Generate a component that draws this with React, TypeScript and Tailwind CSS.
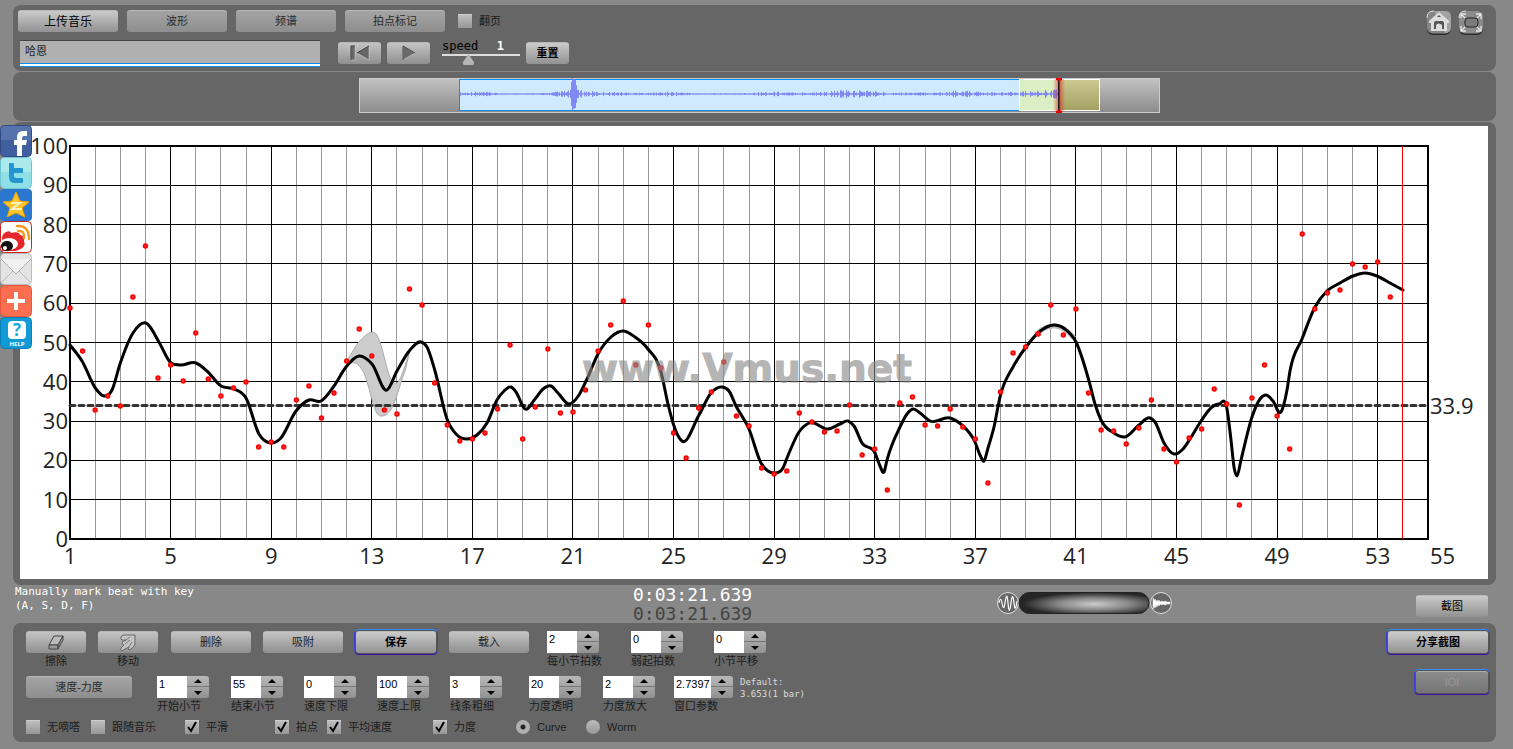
import type { ReactNode } from "react";
import { useId } from "react";

type Point = [number, number];

// Chart geometry, in the units of the chart's viewBox
const LEFT = 50;
const RIGHT = 1408;
const TOP = 20;
const BOTTOM = 413;
const BAR = (RIGHT - LEFT) / 54;

const bars = Array.from({ length: 55 }, (_, i) => i + 1);
const levels = [0, 10, 20, 30, 40, 50, 60, 70, 80, 90, 100];

// One tempo dot for every half bar
const beats = [
  182, 225, 284, 270, 280, 171, 120, 252, 239, 255, 207, 253, 270, 262, 256, 321, 316, 321, 274, 260,
  292, 267, 235, 203, 230, 284, 288, 163, 179, 257, 299, 315, 313, 307, 283, 219, 313, 281, 223, 287,
  286, 264, 225, 199, 175, 239, 199, 242, 307, 332, 282, 266, 236, 290, 300, 342, 348, 345, 287, 296,
  306, 305, 279, 329, 323, 364, 277, 271, 299, 300, 283, 301, 313, 357, 266, 227, 221, 208, 179, 209,
  183, 267, 304, 305, 318, 302, 274, 323, 336, 312, 303, 263, 278, 379, 272, 239, 290, 323, 108, 183,
  167, 164, 138, 141, 136, 171,
];

const tempo: Point[] = [
  [50, 219], [62, 235], [76, 263], [84, 270], [92, 264], [100, 238], [113, 207], [126, 197],
  [140, 218], [150, 236], [160, 239], [176, 237], [187, 245], [201, 260], [214, 263], [226, 272],
  [239, 308], [251, 317], [260, 313], [276, 285], [289, 274], [301, 275], [314, 260], [326, 241],
  [339, 230], [352, 238], [367, 264], [377, 245], [390, 224], [401, 216], [407, 221],
  [415, 245], [427, 293], [437, 309], [447, 313], [457, 309], [467, 297], [477, 274], [484, 265],
  [491, 261], [496, 266], [505, 283], [515, 273], [523, 263], [531, 260], [538, 267],
  [549, 278], [559, 269], [567, 253], [578, 228], [591, 211], [603, 205], [615, 211],
  [628, 223], [641, 246], [648, 278], [653, 297], [662, 315], [679, 289], [691, 267],
  [702, 261], [709, 265], [716, 280], [729, 303], [741, 337], [748, 345], [755, 347], [763, 342],
  [767, 332], [779, 306], [789, 297], [808, 303], [820, 298], [828, 295],
  [834, 300], [842, 317], [855, 327], [860, 340], [864, 346], [867, 334], [880, 301], [887, 288],
  [893, 283], [900, 287], [910, 295], [930, 292], [942, 299], [955, 316], [960, 329],
  [964, 335], [968, 322], [974, 301], [980, 271], [993, 241], [1006, 221], [1018, 207],
  [1035, 199], [1045, 203], [1056, 216], [1069, 255], [1075, 278], [1081, 294], [1094, 307],
  [1105, 311], [1119, 299], [1130, 292], [1135, 296], [1144, 317], [1154, 328],
  [1163, 323], [1170, 313], [1181, 295], [1192, 281], [1199, 278], [1207, 283], [1211, 314],
  [1214, 341], [1217, 350], [1221, 334], [1232, 291], [1240, 273], [1246, 269], [1253, 275],
  [1261, 286], [1267, 264], [1270, 245], [1282, 213], [1295, 181], [1307, 165],
  [1320, 157], [1333, 150], [1345, 147], [1357, 150], [1370, 157], [1383, 164],
];

// Half height of the waveform, one sample per unit
const wave = Array.from({ length: 600 }, (_, i) => {
  const noise = Math.abs(Math.sin(i * 12.9898) * 43758.5453) % 1;
  const swell = Math.max(0, Math.sin(i * 0.065 + 0.5)) + Math.max(0, Math.sin(i * 0.027 + 4.2));
  const peak = 13 * Math.exp(-Math.pow((i - 114.5) / 3, 4));
  const base = i > 370 ? 1.2 : 0.2;
  return 0.6 + noise * noise * (base + swell * 1.8) + peak;
});

const wavePath = wave
  .map((h, i) => `M${100.5 + i} ${(16 - h).toFixed(1)}V${(16 + h).toFixed(1)}`)
  .join("");

// Cubic through all points; tangents are weighted by the spacing of the neighbours
function smooth(pts: Point[]) {
  const slope = (i: number) => (pts[i + 1][1] - pts[i][1]) / (pts[i + 1][0] - pts[i][0]);
  const last = pts.length - 1;
  const tangents = pts.map((p, i) => {
    if (i === 0) return slope(0);
    if (i === last) return slope(last - 1);
    const before = p[0] - pts[i - 1][0];
    const after = pts[i + 1][0] - p[0];
    return (slope(i - 1) * after + slope(i) * before) / (before + after);
  });
  let d = `M${pts[0][0]} ${pts[0][1]}`;
  for (let i = 0; i < last; i++) {
    const [x0, y0] = pts[i];
    const [x1, y1] = pts[i + 1];
    const third = (x1 - x0) / 3;
    d += `C${x0 + third} ${y0 + tangents[i] * third} ${x1 - third} ${y1 - tangents[i + 1] * third} ${x1} ${y1}`;
  }
  return d;
}

const tones = {
  bright: "bg-linear-to-b from-[#cbcbcb] to-[#929292] text-black",
  normal: "bg-linear-to-b from-[#c4c4c4] to-[#8f8f8f] text-[#222]",
  dim: "bg-linear-to-b from-[#a4a4a4] to-[#8e8e8e] text-[#2b2b2b]",
  ringed:
    "bg-linear-to-b from-[#cbcbcb] to-[#929292] font-bold text-black shadow-[0_0_0_1px_#555,0_-1px_0_1px_#2f8cf0,0_1px_0_1px_#3a10b0,0_0_0_2px_#3d3fd8]",
  off: "bg-linear-to-b from-[#8c8c8c] to-[#757575] text-[#999] shadow-[0_0_0_1px_#555,0_-1px_0_1px_#2f8cf0,0_1px_0_1px_#3a10b0,0_0_0_2px_#3d3fd8]",
};

function Button({
  tone = "normal",
  size,
  label,
  disabled,
  children,
}: {
  tone?: keyof typeof tones;
  size: string;
  label?: string;
  disabled?: boolean;
  children: ReactNode;
}) {
  return (
    <button
      type="button"
      aria-label={label}
      disabled={disabled}
      className={`flex h-[22px] shrink-0 items-center justify-center rounded-[3px] border-t border-[#d0d0d0]/60 whitespace-nowrap ${tones[tone]} ${size}`}
    >
      {children}
    </button>
  );
}

function Check({ label, checked }: { label: string; checked?: boolean }) {
  return (
    <label className="relative flex items-center gap-[7px] whitespace-nowrap">
      <input
        type="checkbox"
        defaultChecked={checked}
        className="peer size-[14px] appearance-none border-t border-[#ccc] bg-linear-to-b from-[#bdbdbd] to-[#979797]"
      />
      <svg viewBox="0 0 14 14" className="absolute left-0 hidden size-[14px] peer-checked:block">
        <path d="M3 7 L6 11 L11 2" fill="none" stroke="#000" strokeWidth="2" />
      </svg>
      {label}
    </label>
  );
}

function Radio({ label, checked }: { label: string; checked?: boolean }) {
  return (
    <label className="flex items-center gap-[7px]">
      <input
        type="radio"
        name="view"
        defaultChecked={checked}
        className="size-[14px] appearance-none rounded-full bg-linear-to-b from-[#bdbdbd] to-[#979797] checked:bg-[radial-gradient(circle,#222_2px,#b0b0b0_3px)]"
      />
      {label}
    </label>
  );
}

function Stepper({ label, value, wide }: { label: string; value: string; wide?: boolean }) {
  const id = useId();
  return (
    <div className="whitespace-nowrap">
      <div className="flex h-[22px]">
        <input
          id={id}
          type="text"
          defaultValue={value}
          className={`h-[22px] bg-white pb-[6px] pl-[2px] text-[11px] text-black outline-none ${
            wide ? "w-[37px]" : "w-[30px]"
          }`}
        />
        <div className="flex w-[22px] flex-col overflow-hidden rounded-r-[3px] bg-linear-to-b from-[#b8b8b8] to-[#929292]">
          <button type="button" aria-label={`${label} +`} className="flex h-[11px] items-center justify-center border-b border-[#777]">
            <svg viewBox="0 0 8 4" className="h-1 w-2">
              <path d="M0 4 L4 0 L8 4Z" />
            </svg>
          </button>
          <button type="button" aria-label={`${label} -`} className="flex flex-1 items-center justify-center">
            <svg viewBox="0 0 8 4" className="h-1 w-2">
              <path d="M0 0 L4 4 L8 0Z" />
            </svg>
          </button>
        </div>
      </div>
      <label htmlFor={id} className="block leading-4">
        {label}
      </label>
    </div>
  );
}

function TopBar() {
  return (
    <header className="flex h-[66px] justify-between rounded-lg bg-[#666] pt-[5px] pr-3 pl-[5px]">
      <div>
        <div className="flex items-center gap-[9px]">
          <Button tone="bright" size="w-[100px] text-[12px]">上传音乐</Button>
          <Button tone="dim" size="w-[100px]">波形</Button>
          <Button tone="dim" size="w-[100px]">频谱</Button>
          <Button tone="dim" size="w-[100px]">拍点标记</Button>
          <div className="pl-1">
            <Check label="翻页" />
          </div>
        </div>
        <div className="flex pt-[6px] pl-[2px]">
          <input
            type="text"
            aria-label="曲名"
            defaultValue="哈恩"
            className="mt-[2px] h-[27px] w-[300px] border-t border-[#444] bg-[#b0b0b0] bg-[linear-gradient(#0a8cf0_1px,#fff_1px,#fff_3px,#0a8cf0_3px)] bg-[length:100%_4px] bg-bottom bg-no-repeat px-[5px] pb-2 text-[11px] text-[#222] outline-none"
          />
          <div className="flex items-center gap-[6px] pl-[18px]">
            <Button size="w-[43px]" label="回到开头">
              <svg viewBox="0 0 24 18" className="h-[18px] w-6">
                <path d="M3 2h4v14H3zM21 2v14L9 9z" fill="#666" stroke="#ddd" strokeWidth="0.5" />
                <path d="M3 16V2h4M9 9 21 2" fill="none" stroke="#333" />
              </svg>
            </Button>
            <Button size="w-[43px]" label="播放">
              <svg viewBox="0 0 24 18" className="h-[18px] w-6">
                <path d="M6 2v14l12-7z" fill="#6a6a6a" stroke="#ddd" strokeWidth="0.5" />
                <path d="M6 16V2l12 7" fill="none" stroke="#444" />
              </svg>
            </Button>
            <div className="h-[28px] w-[84px] pl-[6px]">
              <div className="flex h-[14px] items-center justify-between pr-4 font-['DejaVu_Sans_Mono',monospace] text-[12px] text-black">
                <label htmlFor="speed">speed</label>
                <span className="font-bold text-white">1</span>
              </div>
              <input
                id="speed"
                type="range"
                min="0.1"
                max="3"
                step="0.1"
                defaultValue="1"
                className="block h-[14px] w-full appearance-none bg-[linear-gradient(#ddd,#ddd)] bg-[length:100%_2px] bg-[position:0_1px] bg-no-repeat [&::-webkit-slider-thumb]:h-[11px] [&::-webkit-slider-thumb]:w-[12px] [&::-webkit-slider-thumb]:appearance-none [&::-webkit-slider-thumb]:bg-[#b5b5b5] [&::-webkit-slider-thumb]:[clip-path:polygon(50%_0,100%_80%,90%_100%,10%_100%,0_80%)]"
              />
            </div>
            <Button tone="bright" size="w-[43px] font-bold">重置</Button>
          </div>
        </div>
      </div>
      <div className="flex items-start gap-[6px]">
        <a href="#home" aria-label="Home">
          <svg viewBox="0 0 26 25" className="h-[25px] w-[26px]">
            <rect x="1" y="3" width="24" height="22" rx="6" fill="#2b2b2b" />
            <rect x="1" y="1" width="24" height="22.5" rx="6" fill="#858585" />
            <path d="M8 1h11q6 0 6 6v10q0 6-6 6" fill="#a2a2a2" />
            <path d="M1 8Q1 1 8 1" fill="none" stroke="#ddd" />
            <path d="M13 2 3 11v2h2v8h16v-8h2v-2z" fill="#ddd" />
            <path d="M8 13q0-2 2-2h6q2 0 2 2v6h-2v-4q-3-3-6 0v4H8zM11 7l2-2 2 2z" fill="#555" />
          </svg>
        </a>
        <button type="button" aria-label="Fullscreen">
          <svg viewBox="0 0 26 25" className="h-[25px] w-[26px]">
            <rect x="1" y="3" width="24" height="22" rx="6" fill="#2b2b2b" />
            <rect x="1" y="1" width="24" height="22.5" rx="6" fill="#8c8c8c" />
            <path d="M1 8Q1 1 8 1" fill="none" stroke="#ddd" />
            <rect x="7" y="8" width="13" height="9" rx="3" fill="#7c7c7c" stroke="#222" />
            <path d="M3 8V4h5M18 4h5v5M3 16v5h5M23 16v5h-5M3 4l4 4M23 4l-4 4M3 21l4-4M23 21l-4-4" fill="none" stroke="#e4e4e4" strokeWidth="1.3" />
          </svg>
        </button>
      </div>
    </header>
  );
}

function Overview() {
  return (
    <section className="mt-px flex h-[49px] justify-center rounded-lg bg-[#666] pt-[6px] pl-[9px]">
      <svg viewBox="0 0 801 35" className="h-[35px] w-[801px] shrink-0">
        <defs>
          <linearGradient id="idle" x2="0" y2="1">
            <stop offset="0" stopColor="#c2c2c2" />
            <stop offset="1" stopColor="#8c8c8c" />
          </linearGradient>
          <linearGradient id="ahead" x2="0" y2="1">
            <stop offset="0" stopColor="#cbca92" />
            <stop offset="1" stopColor="#a3a062" />
          </linearGradient>
          <linearGradient id="glow">
            <stop offset="0" stopColor="#f00" stopOpacity="0" />
            <stop offset="0.5" stopColor="#c22" stopOpacity="0.6" />
            <stop offset="1" stopColor="#f00" stopOpacity="0" />
          </linearGradient>
        </defs>
        <rect x="0.5" y="0.5" width="800" height="34" fill="url(#idle)" stroke="#ccc" />
        <rect x="100.5" y="1.5" width="600" height="31" fill="#cfeafe" stroke="#0a90f5" />
        <rect x="660.5" y="1.5" width="40" height="31" fill="#daf0c4" />
        <path d={wavePath} stroke="#8088f4" />
        <rect x="700" y="1.5" width="40" height="31" fill="url(#ahead)" />
        <rect x="660.5" y="1.5" width="80" height="31" fill="none" stroke="#fff" />
        <rect x="694" y="1" width="12" height="33" fill="url(#glow)" />
        <path d="M699.5 1v33" stroke="#222" />
        <path d="M700.5 1v33" stroke="#d00" />
        <path d="M697 0h6v2l-3 1-3-1zM697 35h6v-2l-3-1-3 1z" fill="#e00" />
      </svg>
    </section>
  );
}

function TempoChart() {
  return (
    <section className="mt-px rounded-lg bg-[#666] pt-1 pr-2 pb-[6px] pl-[7px]">
      <svg
        viewBox="0 0 1468 453"
        className="block h-auto w-full bg-white font-['Open_Sans',sans-serif] text-[22px]"
        role="img"
        aria-label="Tempo curve"
      >
        <g shapeRendering="crispEdges">
          {bars.map((n) => (
            <path
              key={n}
              d={`M${Math.floor(LEFT + (n - 1) * BAR) + 0.5} ${TOP}V${BOTTOM}`}
              stroke={n % 4 === 1 ? "#000" : "#999"}
            />
          ))}
          {levels.map((v) => (
            <path key={v} d={`M${LEFT} ${Math.floor(BOTTOM - v * 3.93) + 0.5}H${RIGHT}`} stroke="#000" />
          ))}
          <rect x={LEFT} y={TOP} width={RIGHT - LEFT} height={BOTTOM - TOP} fill="none" stroke="#000" strokeWidth="2" />
        </g>

        <g fill="#222">
          {levels.map((v) => (
            <text key={v} x="48" y={BOTTOM - v * 3.93 + 8} textAnchor="end">
              {v}
            </text>
          ))}
          {bars
            .filter((n) => n % 4 === 1)
            .map((n) => (
              <text key={n} x={LEFT + (n - 1) * BAR} y="438" textAnchor="middle">
                {n}
              </text>
            ))}
          <text x="1410" y="438">55</text>
          <text x="1410" y="288">33.9</text>
        </g>

        {/* dynamics band */}
        <path
          d="M327 234C332 228 336 218 340 215C347 207 353 203 357 209C365 225 366 250 374 257C379 261 383 246 390 224L385 245C378 262 374 290 362 290C354 292 352 268 344 247C338 236 333 234 327 240Z"
          fill="#ccc"
          stroke="#aaa"
        />
        <path d={`M${LEFT} 279.5H${RIGHT}`} stroke="#333" strokeWidth="3" strokeDasharray="5 4" strokeLinecap="round" />
        <path d="M1016 208Q1036 190 1054 212" fill="none" stroke="#bbb" strokeWidth="5" />
        <path d={smooth(tempo)} fill="none" stroke="#000" strokeWidth="3" strokeLinecap="round" />
        <path d={`M1382.5 ${TOP}V${BOTTOM}`} stroke="#f00" shapeRendering="crispEdges" />
        {beats.map((y, i) => (
          <circle key={i} cx={LEFT + (i * BAR) / 2} cy={y} r="1.8" fill="#f44" stroke="#f00" strokeWidth="1.8" />
        ))}
        <text
          x="562"
          y="256"
          fill="#888"
          stroke="#888"
          strokeWidth="1"
          opacity="0.62"
          className="font-['DejaVu_Sans',sans-serif] text-[39px] font-bold"
        >
          www.Vmus.net
        </text>
      </svg>
    </section>
  );
}

function StatusRow() {
  return (
    <section className="flex h-[38px] items-start pr-2 pl-[2px] font-['DejaVu_Sans_Mono',monospace]">
      <p className="w-[618px] text-[11px] leading-[14px] text-white">
        Manually mark beat with key
        <br />
        (A, S, D, F)
      </p>
      <div className="text-[18px] leading-[19px]">
        <div className="text-white">0:03:21.639</div>
        <div className="text-[#444]">0:03:21.639</div>
      </div>
      <svg viewBox="0 0 176 24" className="mt-[6px] ml-[245px] h-6 w-[176px]">
        <defs>
          <radialGradient id="zoom" cx="0.58" cy="0.55" r="0.55">
            <stop offset="0" stopColor="#ccc" />
            <stop offset="0.5" stopColor="#888" />
            <stop offset="1" stopColor="#262626" />
          </radialGradient>
        </defs>
        <circle cx="11" cy="12" r="10.5" fill="#666" stroke="#ddd" />
        <path d="M2 12C3 7 4 7 5 12S7 19 8 12 10 1 11 12 13 20 14 12 16 3 17 12 19 17 20 10" fill="none" stroke="#fff" strokeWidth="1.2" />
        <rect x="22" y="1.5" width="130" height="21" rx="10.5" fill="url(#zoom)" stroke="#222" />
        <circle cx="164" cy="12" r="10.5" fill="#666" stroke="#ddd" />
        <path d="M156 7l1 3 1-2 1 3 1-2 1 2 1-2 1 2 2-1 1 1 2-1 2 1h3v2h-3l-2 1-2-1-1 1-2-1-1 2-1-2-1 3-1-2-1 3-1-2-1 3z" fill="#fff" stroke="#fff" strokeWidth="0.5" />
      </svg>
      <div className="mt-[10px] ml-auto font-['Liberation_Sans','Noto_Sans_CJK_SC',sans-serif] text-[11px]">
        <Button tone="bright" size="w-[72px]">截图</Button>
      </div>
    </section>
  );
}

function Controls() {
  return (
    <section className="flex h-[119px] justify-between rounded-lg bg-[#666] pt-2 pr-2 pl-[13px]">
      <div>
        <div className="grid h-[45px] grid-cols-[72px_73px_92px_93px_93px_98px_84px_83px_auto] items-start">
          <div className="w-[60px] text-center leading-4">
            <Button size="w-[60px]" label="擦除">
              <svg viewBox="0 0 18 16" className="h-4 w-[18px]">
                <path d="M7 1h9l-5 9H2z" fill="#bbb" stroke="#444" strokeLinejoin="round" />
                <path d="M2 10v4h9v-4zM11 14l5-9V1l-5 9z" fill="#999" stroke="#444" strokeLinejoin="round" />
              </svg>
            </Button>
            擦除
          </div>
          <div className="w-[60px] text-center leading-4">
            <Button size="w-[60px]" label="移动">
              <svg viewBox="0 0 18 18" className="h-[18px] w-[18px]">
                <path
                  d="M5 1h11v9q-1 3-4 5l-2 1q-1-1 0-3l-4 2-3 2q-2-1-1-3l3-3q-2 0-2-2t2-2l2-1H3Q1 5 2 3t3-2z"
                  fill="#c4c4c4"
                  stroke="#666"
                  strokeLinejoin="round"
                />
                <path d="M7 6l4-3M6 10l5-4M10 13l3-5" fill="none" stroke="#777" />
              </svg>
            </Button>
            移动
          </div>
          <Button size="w-[80px]">删除</Button>
          <Button size="w-[80px]">吸附</Button>
          <Button tone="ringed" size="w-[80px]">保存</Button>
          <Button size="w-[80px]">载入</Button>
          <Stepper label="每小节拍数" value="2" />
          <Stepper label="弱起拍数" value="0" />
          <Stepper label="小节平移" value="0" />
        </div>
        <div className="grid h-[42px] grid-cols-[131px_74px_73px_73px_73px_79px_74px_71px_auto] items-start">
          <Button tone="dim" size="w-[106px]">速度-力度</Button>
          <Stepper label="开始小节" value="1" />
          <Stepper label="结束小节" value="55" />
          <Stepper label="速度下限" value="0" />
          <Stepper label="速度上限" value="100" />
          <Stepper label="线条粗细" value="3" />
          <Stepper label="力度透明" value="20" />
          <Stepper label="力度放大" value="2" />
          <div className="flex">
            <Stepper label="窗口参数" value="2.7397" wide />
            <p className="pl-[7px] font-['DejaVu_Sans_Mono',monospace] text-[9px] leading-3 whitespace-nowrap text-[#ddd]">
              Default:
              <br />
              3.653(1 bar)
            </p>
          </div>
        </div>
        <div className="grid h-[18px] grid-cols-[65px_94px_90px_52px_106px_83px_70px_auto] items-center">
          <Check label="无嘀嗒" />
          <Check label="跟随音乐" />
          <Check label="平滑" checked />
          <Check label="拍点" checked />
          <Check label="平均速度" checked />
          <Check label="力度" checked />
          <Radio label="Curve" checked />
          <Radio label="Worm" />
        </div>
      </div>
      <div className="flex flex-col items-end gap-[18px]">
        <Button tone="ringed" size="w-[100px]">分享截图</Button>
        <Button tone="off" size="w-[72px]" disabled>IOI</Button>
      </div>
    </section>
  );
}

function ShareBar() {
  return (
    <nav className="absolute top-[125px] left-0 flex flex-col" aria-label="Share">
      <a href="#facebook" aria-label="Facebook">
        <svg viewBox="0 0 32 32" className="size-8">
          <rect x="0.5" y="0.5" width="31" height="31" rx="4" fill="#3f5f9f" stroke="#2f4a85" />
          <path d="M1 4q0-3 3-3h24q3 0 3 3v11H1z" fill="#6f88bd" fillOpacity="0.5" />
          <path d="M17 31V20h-3v-5h3v-3q0-6 6-6h4v5h-3q-2 0-2 2v2h5l-1 5h-4v11z" fill="#fff" />
        </svg>
      </a>
      <a href="#twitter" aria-label="Twitter">
        <svg viewBox="0 0 32 32" className="size-8">
          <rect x="0.5" y="0.5" width="31" height="31" rx="4" fill="#8fe0e6" stroke="#6cc5d2" />
          <path d="M1 4q0-3 3-3h24q3 0 3 3v11H1z" fill="#bdf0f2" fillOpacity="0.6" />
          <path d="M9 6h4q1 0 1 1v4h8q1 0 1 1v3q0 1-1 1h-8v3q0 2 2 2h6q1 0 1 1v3q0 1-1 1h-7q-6 0-6-6V7q0-1 0-1z" fill="#2396cf" />
        </svg>
      </a>
      <a href="#qzone" aria-label="QZone">
        <svg viewBox="0 0 32 32" className="size-8">
          <rect width="32" height="32" rx="4" fill="#2b77cf" />
          <path d="M16 3l4 9 9 1-7 6 3 9-9-4-9 4 3-9-7-6 9-1z" fill="#ffc52a" stroke="#e9a000" />
          <path d="M11 14h9l-8 6h10" fill="none" stroke="#fff3c0" strokeWidth="2" />
        </svg>
      </a>
      <a href="#weibo" aria-label="Weibo">
        <svg viewBox="0 0 32 32" className="size-8">
          <rect x="0.5" y="0.5" width="31" height="31" rx="4" fill="#fff" stroke="#c22" />
          <path d="M2 17q0-4 4-6 4-2 5 1 8-2 9 2 5 0 4 6 3 7-9 10H2z" fill="#e6262b" />
          <ellipse cx="9" cy="23" rx="9" ry="6" fill="#fff" />
          <ellipse cx="7" cy="25" rx="6" ry="5" fill="#111" />
          <circle cx="5" cy="27" r="2" fill="#fff" />
          <path d="M17 5q12-1 12 13M18 10q7-1 6 7" fill="none" stroke="#f59a1d" strokeWidth="2.5" strokeLinecap="round" />
        </svg>
      </a>
      <a href="#mail" aria-label="Mail">
        <svg viewBox="0 0 32 32" className="size-8">
          <rect x="0.5" y="0.5" width="31" height="31" rx="4" fill="#e4e4e4" stroke="#bbb" />
          <path d="M1 6l15 15L31 6" fill="#f0f0f0" stroke="#aaa" />
          <path d="M2 29l11-11M30 29L19 18" fill="none" stroke="#bbb" />
        </svg>
      </a>
      <a href="#more" aria-label="More">
        <svg viewBox="0 0 32 32" className="size-8">
          <rect x="0.5" y="0.5" width="31" height="31" rx="4" fill="#fb6e4f" stroke="#e8573c" />
          <path d="M14 7h4v7h7v4h-7v7h-4v-7H7v-4h7z" fill="#fff" />
        </svg>
      </a>
      <a href="#help" aria-label="Help">
        <svg viewBox="0 0 32 32" className="size-8">
          <rect x="0.5" y="0.5" width="31" height="31" rx="4" fill="#119ad6" stroke="#0a7fb8" />
          <rect x="8" y="4" width="18" height="18" rx="4" fill="#fff" />
          <text x="17" y="19" textAnchor="middle" fill="#17a9e0" className="font-['Open_Sans',sans-serif] text-[17px] font-bold">
            ?
          </text>
          <text x="17" y="29" textAnchor="middle" fill="#fff" className="font-['Open_Sans',sans-serif] text-[6px] font-bold">
            HELP
          </text>
        </svg>
      </a>
    </nav>
  );
}

export default function App() {
  return (
    <main className="relative min-h-screen min-w-[1240px] bg-[#888] pt-[5px] pr-[17px] pb-[7px] pl-[13px] font-['Liberation_Sans','Noto_Sans_CJK_SC',sans-serif] text-[11px] text-[#1c1c1c]">
      <TopBar />
      <Overview />
      <TempoChart />
      <StatusRow />
      <Controls />
      <ShareBar />
    </main>
  );
}
